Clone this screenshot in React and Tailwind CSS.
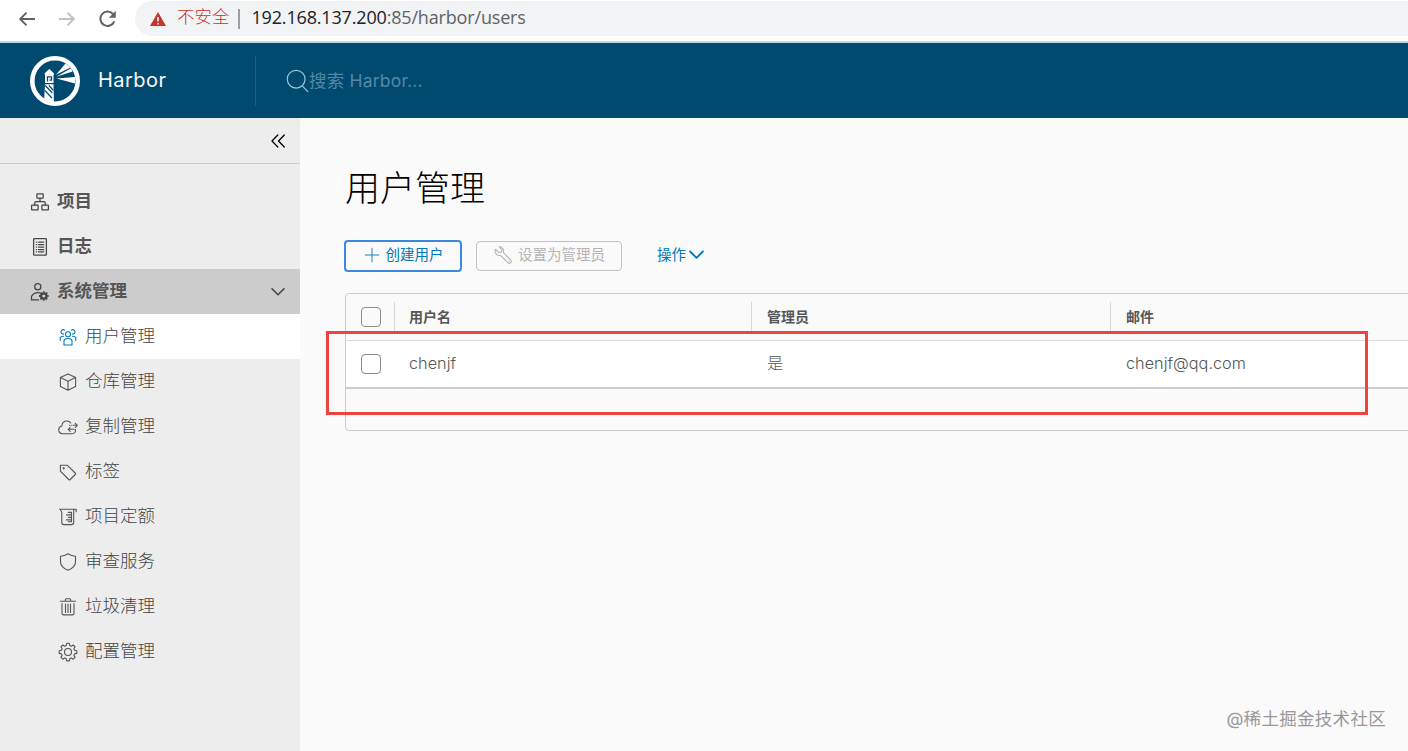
import React, { useState } from 'react';
import clsx from 'clsx';

const Icon = ({ children, className = 'size-5', width = 1.1 }) => (
    <svg
        viewBox="0 0 20 20"
        className={clsx('shrink-0', className)}
        fill="none"
        stroke="currentColor"
        strokeWidth={width}
        strokeLinecap="round"
        strokeLinejoin="round"
    >
        {children}
    </svg>
);

const GEAR = 'M8.7 1.3h2.6l.5 2.3 1.5.6 2-1.2 1.8 1.8-1.2 2 .6 1.5 2.3.5v2.6l-2.3.5-.6 1.5 1.2 2-1.8 1.8-2-1.2-1.5.6-.5 2.3H8.7l-.5-2.3-1.5-.6-2 1.2-1.8-1.8 1.2-2-.6-1.5-2.3-.5V8.8l2.3-.5.6-1.5-1.2-2L4.7 3l2 1.2 1.5-.6z';

const icons = {
    projects: (
        <>
            <rect x="6.9" y="1.9" width="6.3" height="4.3" rx=".4" />
            <rect x="1.6" y="13.2" width="6.5" height="4.6" rx=".4" />
            <rect x="11.9" y="13.2" width="6.5" height="4.6" rx=".4" />
            <path d="M10 6.4v3.2M4.8 13v-2.3q0-1 1-1h8.4q1 0 1 1V13" />
        </>
    ),
    logs: (
        <>
            <rect x="3.6" y="1.5" width="12.8" height="16.7" rx=".8" />
            <path d="M8.5 5h5.3M8.5 7.5h5.3M8.5 10h5.3M8.5 12.5h5.3M8.5 14.8h5.3M6.3 5h.4M6.3 7.5h.4M6.3 10h.4M6.3 12.5h.4M6.3 14.8h.4" />
        </>
    ),
    admin: (
        <>
            <circle cx="7.8" cy="4.7" r="3.1" />
            <path d="M8.5 17.9H1.5v-3.6c1.4-2.3 3.7-3.8 6.2-3.8l2 .3" />
            <circle cx="13.8" cy="14" r="2.7" strokeWidth="2.2" />
            <path
                d="M13.8 9.2v1.4M13.8 17.4v1.4M9 14h1.4M17.2 14h1.4M10.4 10.600l1 1M16.200 16.400l1 1M10.400 17.400l1-1M16.200 11.600l1-1"
                strokeWidth="1.8"
                strokeLinecap="butt"
            />
        </>
    ),
    users: (
        <>
            <circle cx="10" cy="7.3" r="2.5" />
            <path d="M6 18v-3.800C6 12.600 7.600 11.500 10 11.500s4 1.100 4 2.700V18z" />
            <path d="M6.600 3.200A2.200 2.200 0 1 0 5.700 7M13.400 3.200A2.200 2.200 0 1 1 14.300 7M2.200 13.500v-2.200c0-1.200 1.300-2 3.500-2M17.800 13.500v-2.200c0-1.200-1.300-2-3.500-2" />
        </>
    ),
    registries: <path d="M10 1.900l7.600 3.500v9L10 18.200l-7.600-3.800v-9zM2.600 5.600L10 9.200l7.400-3.600M10 9.200v8.800" />,
    replication: (
        <>
            <path d="M14.200 16.700H4.400A3.900 3.900 0 0 1 3.800 9C4.100 5.700 6.400 4 8.800 4c2 0 3.300.8 4 2M17.500 12.500c.4 2.300-1 4.200-3.300 4.200" />
            <path d="M15 8.300h4.200M17.300 6.300l2 2-2 2M16.300 12.300h-6M12.200 10.300l-2 2 2 2M11.500 8.300h.2M13.200 8.300h.2" />
        </>
    ),
    labels: (
        <>
            <path d="M2.400 3.200v6l8.300 8.300c.5.500 1 .5 1.500 0l5-5c.5-.5.5-1 0-1.500L9.200 3.200z" />
            <circle cx="5.700" cy="6.300" r=".6" />
        </>
    ),
    quotas: (
        <>
            <path d="M1.800 2.200h16.400v2.600M1.800 2.200c1.100 1.100 2 2.300 2 3.900v9.500c0 1.200.8 2 2 2h7.900c1.200 0 2-.8 2-2V2.400" />
            <path d="M10.300 5.400h3.200M8.500 7.900h5M10.300 10.400h3.200M8.500 12.900h5M13.500 5.400v9.400h-3.200" />
        </>
    ),
    interrogation: <path d="M10 1.700c2.300 1.600 4.700 2.400 7.500 2.600v5.400c0 4-3 6.700-7.500 8.500-4.500-1.800-7.500-4.500-7.500-8.500V4.300c2.800-.2 5.200-1 7.500-2.600z" />,
    trash: <path d="M2.300 4.300h15.400M7.300 4.100V2.800c0-.6.400-1 1-1h3.400c.6 0 1 .4 1 1v1.300M4 6.500v9.900c0 .9.600 1.500 1.500 1.500h9c.9 0 1.500-.6 1.500-1.500V6.500M7.500 7v8.400M10 7v8.400M12.500 7v8.400" />,
    config: (
        <>
            <path d={GEAR} />
            <circle cx="10" cy="10" r="3.5" />
        </>
    ),
};

const mainMenu = [
    { key: 'projects', label: '项目' },
    { key: 'logs', label: '日志' },
];

const adminMenu = [
    { key: 'users', label: '用户管理' },
    { key: 'registries', label: '仓库管理' },
    { key: 'replication', label: '复制管理' },
    { key: 'labels', label: '标签' },
    { key: 'quotas', label: '项目定额' },
    { key: 'interrogation', label: '审查服务' },
    { key: 'trash', label: '垃圾清理' },
    { key: 'config', label: '配置管理' },
];

const users = [{ name: 'chenjf', admin: '是', email: 'chenjf@qq.com' }];

const AddressBar = () => (
    <div className="h-[43px] bg-white border-b-2 border-[#b9d9e6] flex items-start text-[#5f6368]">
        <div className="flex items-center gap-5 pl-[17px] h-[37px]">
            <Icon width={1.9}>
                <path d="M18 10H3.500M9.500 3.700L3.200 10l6.300 6.300" strokeLinecap="butt" strokeLinejoin="miter" />
            </Icon>
            <Icon width={1.9} className="size-5 text-[#bfc1c3]">
                <path d="M2 10h14.500M10.500 3.700l6.300 6.300-6.300 6.300" strokeLinecap="butt" strokeLinejoin="miter" />
            </Icon>
            <Icon width={2}>
                <path d="M17.300 12.300A7.200 7.200 0 1 1 16 5" strokeLinecap="butt" />
                <path d="M18.800 1.700v7h-7z" fill="currentColor" stroke="none" />
            </Icon>
        </div>
        <div className="ml-[18px] mt-px grow h-[35px] bg-[#f1f3f4] rounded-l-full flex items-center pl-[15px]">
            <svg viewBox="0 0 16 14" className="w-4 h-3.5">
                <path d="M8 0l8 14H0z" fill="#c5352b" />
                <path d="M8 5v4.500M8 11v1.600" stroke="#f1f3f4" strokeWidth="1.6" />
            </svg>
            <span className="ml-[11px] mb-0.5 text-[17.5px] text-[#c5352b] font-light">不安全</span>
            <span className="ml-2 w-0.5 h-5 bg-[#9aa0a6]" />
            <span className="ml-3 mb-0.5 font-['Open_Sans','Noto_Sans_CJK_SC',sans-serif] text-[18px] tracking-[-0.17px] text-[#5f6368]">
                <span className="text-[#202124]">192.168.137.200</span>:85/harbor/users
            </span>
        </div>
    </div>
);

const HarborLogo = () => (
    <svg viewBox="0 0 50 50" className="size-[50px]">
        <circle cx="25" cy="25" r="22.700" fill="none" stroke="#fff" strokeWidth="4.600" />
        <g fill="#fff">
            <path d="M19.300 13l4.600 4.300v1.500h-9.200v-1.500z" />
            <path d="M15 18.200h8.500V27H15z" />
            <path d="M15 28.200h8.500L24 49l-10-2.500z" />
            <path d="M26 18.700L35.500 7.600l5 4z" />
            <path d="M26.200 20.700l15-8.500 1.400 3.200z" />
            <path d="M26.500 22.600l18.500-1.700v6.600z" />
        </g>
        <g stroke="#004a70" fill="none">
            <path d="M17.500 25.400v-4.600h4v3.300h-2" strokeWidth="1.300" />
            <path d="M15.300 29.500l7 7.500M14.900 34.500l7 7.500M18.800 29.500l4.700 5" strokeWidth="1.200" />
        </g>
    </svg>
);

const Header = () => (
    <header className="h-[75px] bg-[#004a70] flex items-center">
        <div className="w-64 h-[50px] pl-[30px] border-r border-[#1f6081] flex items-center text-[#fafafa]">
            <HarborLogo />
            <span className="ml-[18px] mb-0.5 text-xl tracking-[0.45px]">Harbor</span>
        </div>
        <div className="ml-[29px] flex items-center">
            <Icon className="size-6 text-[#9cc3d6]" width={1}>
                <circle cx="9.300" cy="8.500" r="7.400" />
                <path d="M14.800 14.500l4.200 4.300" />
            </Icon>
            <span className="mt-0.5 text-[17.5px] tracking-[0.2px] text-[#5089a6]">搜索 Harbor...</span>
        </div>
    </header>
);

const MenuItem = ({ item, active, onClick }) => (
    <button
        onClick={onClick}
        className={clsx('w-full h-[45px] pl-[58px] flex items-center gap-[7px] text-left', active && 'bg-white')}
    >
        <Icon className={clsx('size-5', active ? 'text-[#0079b8]' : 'text-[#565656]')}>{icons[item.key]}</Icon>
        <span className="text-[17.5px] font-light">{item.label}</span>
    </button>
);

const Sidebar = () => {
    const [active, setActive] = useState('users');

    return (
        <aside className="w-[300px] shrink-0 bg-[#ededed] text-[#454545]">
            <div className="h-[46px] border-b border-[#cccccc] flex items-center justify-end pr-3">
                <Icon className="size-5 text-black" width={1.3}>
                    <path d="M9.800 4L4 10l5.800 6M16.300 4l-5.800 6 5.800 6" />
                </Icon>
            </div>
            <nav className="pt-[15px]">
                {mainMenu.map((item) => (
                    <div key={item.key} className="h-[45px] pl-[30px] flex items-center gap-[7px]">
                        <Icon width={1.25}>{icons[item.key]}</Icon>
                        <span className="text-[17.5px] font-bold text-[#565656]">{item.label}</span>
                    </div>
                ))}
                <div className="h-[45px] pl-[30px] pr-3.5 bg-[#cccccc] flex items-center gap-[7px]">
                    <Icon width={1.25}>{icons.admin}</Icon>
                    <span className="grow text-[17.5px] font-bold text-[#565656]">系统管理</span>
                    <Icon className="size-4" width={2}>
                        <path d="M2.500 6l7.500 7.500L17.500 6" />
                    </Icon>
                </div>
                {adminMenu.map((item) => (
                    <MenuItem key={item.key} item={item} active={active === item.key} onClick={() => setActive(item.key)} />
                ))}
            </nav>
        </aside>
    );
};

const Checkbox = () => (
    <input type="checkbox" className="appearance-none block size-5 ml-[15px] border border-[#8c8c8c] rounded-[4px] checked:bg-[#0079b8]" />
);

const columns = 'grid grid-cols-[48px_357px_359px_1fr] items-center';

const UserTable = () => (
    <div className="relative mt-[21px] ml-px h-[138px] w-[1080px] border border-[#cccccc] rounded-[4px] text-[#565656]">
        <div className={clsx(columns, 'h-[46px] text-[14px] font-bold')}>
            <Checkbox />
            {['用户名', '管理员', '邮件'].map((title, i) => (
                <div key={title} className={clsx('h-[31px] pb-0.5 border-l border-[#d8d8d8] flex items-center', i === 0 ? 'pl-3.5' : 'pl-[15px]')}>
                    {title}
                </div>
            ))}
        </div>
        {users.map((user) => (
            <div key={user.name} className={clsx(columns, 'h-[49px] bg-white border-t border-[#dddddd] border-b-2 border-b-[#cccccc] text-[16.25px] font-light')}>
                <Checkbox />
                <span className="pl-[15px] pb-0.5">{user.name}</span>
                <span className="pl-4 pb-0.5">{user.admin}</span>
                <span className="pl-4 pb-0.5">{user.email}</span>
            </div>
        ))}
        <div className="absolute -left-5 top-[37px] w-[1042px] h-[84px] border-3 border-[#ef4340]" />
    </div>
);

const App = () => {
    return (
        <div className="relative w-full h-[751px] overflow-hidden flex flex-col bg-[#fafafa] font-['Inter','Noto_Sans_CJK_SC',sans-serif]">
            <AddressBar />
            <Header />
            <div className="flex grow min-h-0">
                <Sidebar />
                <main className="grow min-w-0 pl-11 pt-[44px] overflow-hidden">
                    <h1 className="h-[52px] pl-px text-[35px] leading-[52px] font-extralight text-black">用户管理</h1>
                    <div className="mt-[26px] flex items-center text-[14.5px]">
                        <button className="w-[118px] h-8 border-2 border-[#3c87df] rounded-[4px] flex items-center justify-center gap-[5px] text-[#0079b8]">
                            <Icon className="size-[18px] mb-0.5" width={1}>
                                <path d="M10 2.500v15M2.500 10h15" />
                            </Icon>
                            <span className="mb-0.5">创建用户</span>
                        </button>
                        <button className="ml-3.5 w-[146px] h-[30px] border border-[#c1c1c1] rounded-[4px] flex items-center justify-center gap-[5px] text-[#b5b5b5]">
                            <Icon className="size-5 mb-0.5">
                                <path d="M6.200 1.800L9 4.500 8.500 7 6 7.600 2.500 4.300C1 7.600 3.800 11.300 7.500 10.300l7.300 7.400c1.900 1.800 4.600-.8 2.800-2.800l-7.200-7.200c1-3.500-1.500-6.300-4.200-5.900zM15.800 16h.3" />
                            </Icon>
                            <span className="mb-0.5">设置为管理员</span>
                        </button>
                        <button className="ml-[35px] mb-0.5 flex items-center gap-[3px] text-[#0079b8]">
                            操作
                            <Icon className="size-[15px] mb-0.5" width={2.5}>
                                <path d="M1.500 6l8.500 8.500L18.500 6" />
                            </Icon>
                        </button>
                    </div>
                    <UserTable />
                </main>
            </div>
            <span className="absolute right-[22px] top-[706px] text-[17.5px] tracking-[0.3px] text-[#999999]">@稀土掘金技术社区</span>
        </div>
    );
};

export default App;
